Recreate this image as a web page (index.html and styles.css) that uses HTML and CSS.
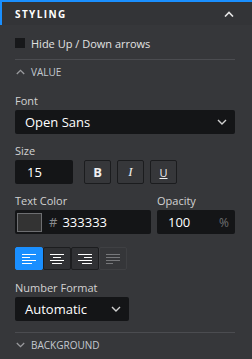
FILE: index.html
```html
<!DOCTYPE html>
<html lang="en">

<head>
  <meta charset="UTF-8" />
  <meta name="viewport" content="width=device-width, initial-scale=1.0" />
  <title>Styling</title>
  <link rel="stylesheet" href="styles.css">
</head>

<body>
  <div class="panel">
    <div class="panel-head">
      <span class="panel-title">STYLING</span>
      <svg class="chev" width="10" height="6" viewBox="0 0 10 6"><path d="M1 5.5 5 1.5 9 5.5" fill="none" stroke="#e6e6e6" stroke-width="1.6"/></svg>
    </div>

    <div class="panel-body">
      <label class="check-row">
        <span class="checkbox"></span>
        <span>Hide Up / Down arrows</span>
      </label>

      <div class="section">
        <div class="section-head">
          <svg width="9" height="6" viewBox="0 0 9 6"><path d="M0.8 5 4.5 1.3 8.2 5" fill="none" stroke="#9a9b9e" stroke-width="1.3"/></svg>
          <span>VALUE</span>
        </div>

        <div class="field">
          <div class="label">Font</div>
          <div class="select">
            <span>Open Sans</span>
            <svg width="10" height="6" viewBox="0 0 10 6"><path d="M1 1 5 5 9 1" fill="none" stroke="#d0d0d0" stroke-width="1.4"/></svg>
          </div>
        </div>

        <div class="field">
          <div class="label">Size</div>
          <div class="row">
            <div class="input size-input">15</div>
            <div class="btn-group">
              <button class="fmt-btn bold">B</button>
              <button class="fmt-btn italic">I</button>
              <button class="fmt-btn under">U</button>
            </div>
          </div>
        </div>

        <div class="row color-row">
          <div class="field grow">
            <div class="label">Text Color</div>
            <div class="input color-input">
              <span class="swatch"></span>
              <span class="hash">#</span>
              <span>333333</span>
            </div>
          </div>
          <div class="field opacity">
            <div class="label">Opacity</div>
            <div class="input pct-input">
              <span>100</span>
              <span class="pct">%</span>
            </div>
          </div>
        </div>

        <div class="align-group">
          <button class="align-btn active">
            <svg width="14" height="10" viewBox="0 0 14 10"><path d="M0 .5h14M0 3.5h8M0 6.5h14M0 9.5h10" stroke="#fff" stroke-width="1"/></svg>
          </button>
          <button class="align-btn">
            <svg width="14" height="10" viewBox="0 0 14 10"><path d="M0 .5h14M3 3.5h8M0 6.5h14M2 9.5h10" stroke="#fff" stroke-width="1"/></svg>
          </button>
          <button class="align-btn">
            <svg width="14" height="10" viewBox="0 0 14 10"><path d="M0 .5h14M6 3.5h8M0 6.5h14M4 9.5h10" stroke="#fff" stroke-width="1"/></svg>
          </button>
          <button class="align-btn disabled">
            <svg width="14" height="10" viewBox="0 0 14 10"><path d="M0 .5h14M0 3.5h14M0 6.5h14M0 9.5h7" stroke="#77787b" stroke-width="1"/></svg>
          </button>
        </div>

        <div class="field">
          <div class="label tall">Number Format</div>
          <div class="select small">
            <span>Automatic</span>
            <svg width="10" height="6" viewBox="0 0 10 6"><path d="M1 1 5 5 9 1" fill="none" stroke="#d0d0d0" stroke-width="1.4"/></svg>
          </div>
        </div>
      </div>

      <div class="section last">
        <div class="section-head">
          <svg width="9" height="6" viewBox="0 0 9 6"><path d="M0.8 1 4.5 4.7 8.2 1" fill="none" stroke="#9a9b9e" stroke-width="1.3"/></svg>
          <span>BACKGROUND</span>
        </div>
      </div>
    </div>
  </div>
</body>

</html>
```

FILE: styles.css
```css
* {
  box-sizing: border-box;
}

body {
  margin: 0;
  background-color: #36373a;
  font-family: "Open Sans", sans-serif;
  color: #d6d6d6;
}

.panel {
  width: 252px;
  height: 359px;
  overflow: hidden;
}

.panel-head {
  display: flex;
  justify-content: space-between;
  align-items: center;
  height: 25px;
  padding: 1px 18px 0 13px;
  border-top: 2px solid #1a8fff;
  border-left: 2px solid #1a8fff;
  background-color: #333437;
}

.panel-title {
  font-size: 10px;
  font-weight: 700;
  letter-spacing: 1.4px;
  color: #fff;
}

.panel-body {
  padding: 0 17px 0 15px;
}

.check-row {
  display: flex;
  align-items: center;
  gap: 6px;
  height: 34px;
  padding-top: 2px;
  font-size: 11px;
  color: #e2e2e2;
}

.checkbox {
  width: 10px;
  height: 10px;
  background-color: #17181a;
}

.section {
  border-top: 1px solid #4b4c50;
}

.section-head {
  display: flex;
  align-items: center;
  gap: 6px;
  height: 24px;
  padding-left: 1px;
  font-size: 10px;
  color: #c4c9d0;
}

.field {
  display: flex;
  flex-direction: column;
}

.label {
  display: flex;
  align-items: flex-end;
  height: 26px;
  padding-bottom: 2px;
  line-height: 15px;
  font-size: 11px;
  color: #d2d2d2;
}

.label.tall {
  height: 27px;
}

.select {
  display: flex;
  justify-content: space-between;
  align-items: center;
  height: 24px;
  padding: 0 8px 0 10px;
  background-color: #141517;
  border-radius: 2px;
  font-size: 13px;
  color: #fff;
}

.select.small {
  width: 114px;
}

.row {
  display: flex;
  gap: 6px;
}

.input {
  display: flex;
  align-items: center;
  height: 24px;
  background-color: #141517;
  border-radius: 2px;
  font-size: 13px;
  color: #fff;
}

.size-input {
  width: 58px;
  padding-left: 12px;
}

.btn-group {
  display: flex;
  gap: 6px;
  margin-left: 5px;
}

.fmt-btn {
  width: 27px;
  height: 24px;
  padding: 0;
  background-color: #36373a;
  border: 1px solid #1b1c1e;
  border-radius: 2px;
  color: #f0f0f0;
  font-family: "Open Sans", sans-serif;
  font-size: 12px;
}

.fmt-btn.bold {
  font-weight: 700;
  font-size: 13px;
}

.fmt-btn.italic {
  font-family: "Liberation Serif", serif;
  font-style: italic;
  font-size: 13px;
}

.fmt-btn.under {
  text-decoration: underline;
  font-size: 11px;
}

.grow {
  flex: 1;
}

.color-input {
  padding-left: 2px;
}

.swatch {
  width: 25px;
  height: 19px;
  margin-right: 7px;
  border: 1px solid #6d6e71;
  background-color: #333;
}

.hash {
  margin-right: 5px;
  color: #8a8b8e;
}

.opacity {
  width: 78px;
}

.pct-input {
  justify-content: space-between;
  padding: 0 6px 0 11px;
}

.pct {
  font-size: 12px;
  color: #6f7073;
}

.align-group {
  display: flex;
  margin-top: 13px;
}

.align-btn {
  display: flex;
  align-items: center;
  justify-content: center;
  width: 28px;
  height: 23px;
  padding: 0;
  background-color: #303134;
  border: 1px solid #1c1d1f;
  border-radius: 2px;
}

.align-btn.active {
  background-color: #1a8fff;
  border-color: #1a8fff;
}

.align-btn.disabled {
  background-color: #353639;
  border-color: #3f4043;
}

.section.last {
  margin-top: 11px;
}

.section.last .section-head {
  height: 23px;
}
```
